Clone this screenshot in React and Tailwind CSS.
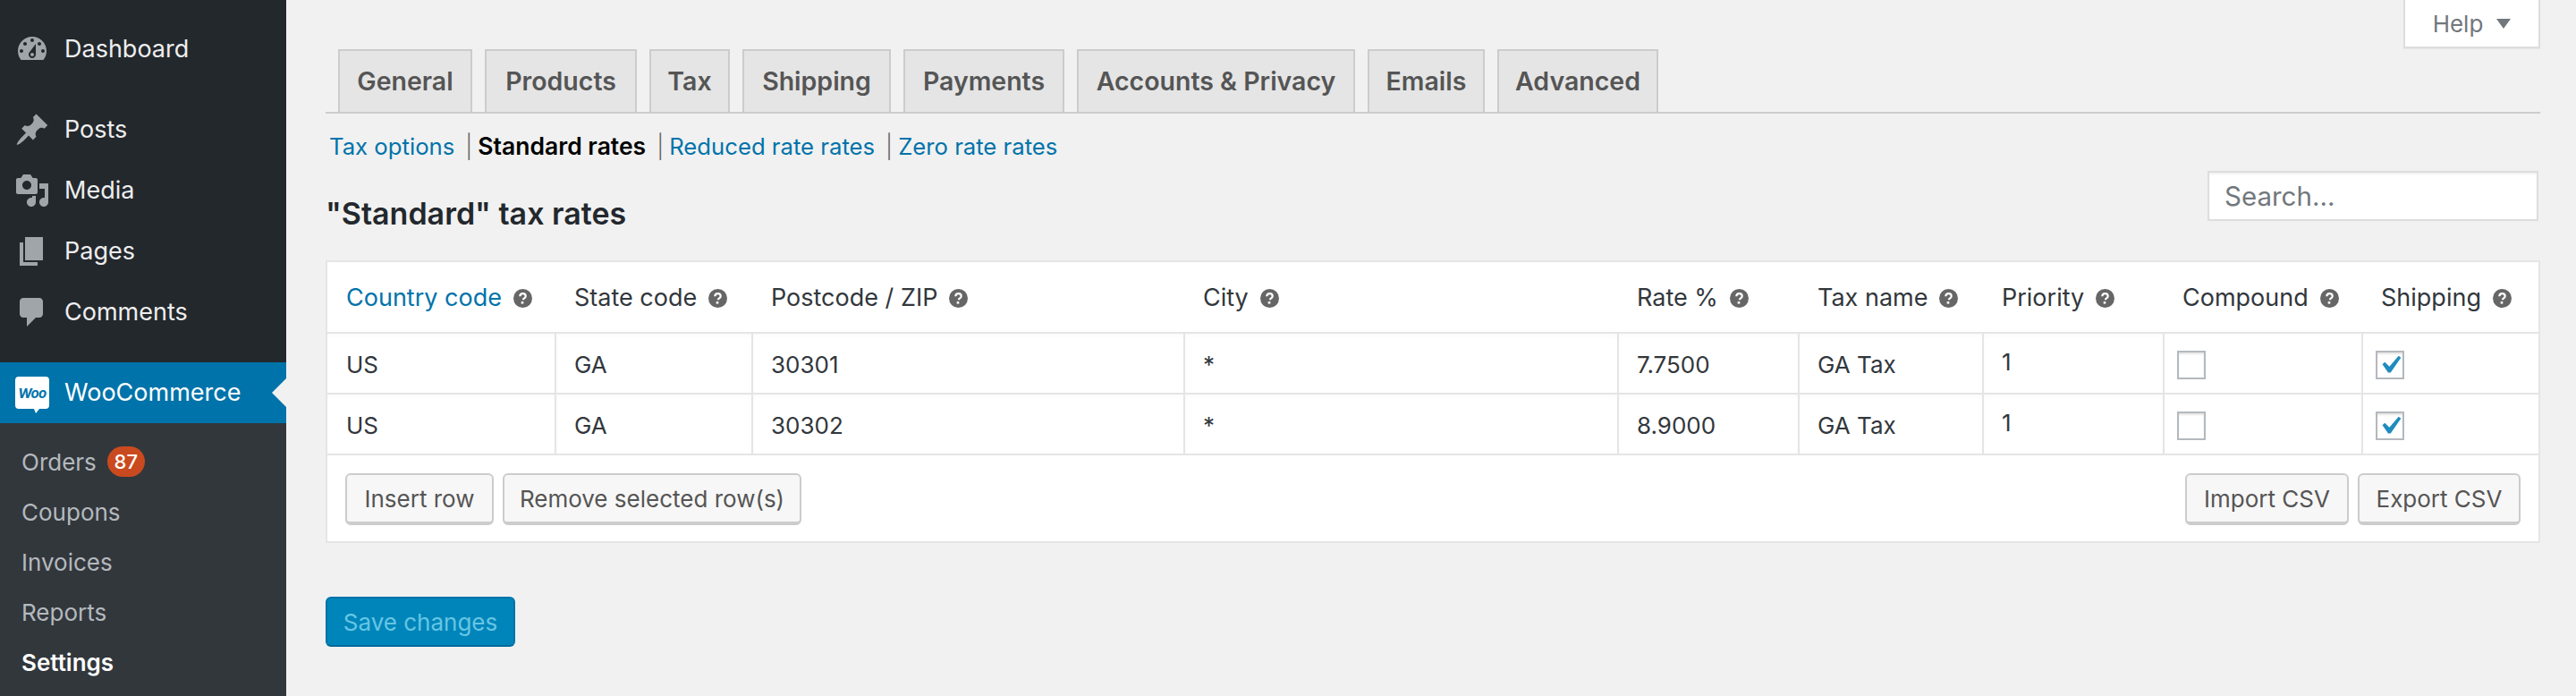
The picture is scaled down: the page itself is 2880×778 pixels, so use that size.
import React from 'react';

const menuItems = [
  { label: 'Posts', d: 'M10.44 3.02l1.82-1.82 6.36 6.35-1.83 1.82c-1.05-.68-2.48-.57-3.41.36l-.75.75c-.92.93-1.04 2.35-.35 3.41l-1.83 1.82-2.41-2.41-2.8 2.79c-.42.42-3.38 2.71-3.8 2.29s1.86-3.39 2.28-3.81l2.79-2.79L4.1 9.36l1.83-1.82c1.05.69 2.48.57 3.4-.36l.75-.75c.93-.92 1.05-2.35.36-3.41z' },
  { label: 'Media', d: 'M13 11V4c0-.55-.45-1-1-1h-1.67L9 1H5L3.67 3H2c-.55 0-1 .45-1 1v7c0 .55.45 1 1 1h10c.55 0 1-.45 1-1zM7 4.5c1.38 0 2.5 1.12 2.5 2.5S8.38 9.5 7 9.5 4.5 8.38 4.5 7 5.62 4.5 7 4.5zM14 6h5v10.5c0 1.38-1.12 2.5-2.5 2.5S14 17.88 14 16.5s1.12-2.5 2.5-2.5c.17 0 .34.02.5.05V9h-3V6zm-4 8.05V13h2v3.5c0 1.38-1.12 2.5-2.5 2.5S7 17.88 7 16.5 8.12 14 9.5 14c.17 0 .34.02.5.05z' },
  { label: 'Pages', d: 'M6 15V2h10v13H6zm-1 1h8v2H3V5h2v11z' },
  { label: 'Comments', d: 'M5 2h9c1.1 0 2 .9 2 2v7c0 1.1-.9 2-2 2h-2l-5 5v-5H5c-1.1 0-2-.9-2-2V4c0-1.1.9-2 2-2z' },
];

const dashboardPath = 'M3.76 16h12.48c1.1-1.37 1.76-3.11 1.76-5 0-4.42-3.58-8-8-8s-8 3.58-8 8c0 1.89.66 3.63 1.76 5zM10 4c.55 0 1 .45 1 1s-.45 1-1 1-1-.45-1-1 .45-1 1-1zM6 6c.55 0 1 .45 1 1s-.45 1-1 1-1-.45-1-1 .45-1 1-1zm8 0c.55 0 1 .45 1 1s-.45 1-1 1-1-.45-1-1 .45-1 1-1zm-5.37 5.55L12 7v6c0 1.1-.9 2-2 2s-2-.9-2-2c0-.57.24-1.08.63-1.45zM4 10c.55 0 1 .45 1 1s-.45 1-1 1-1-.45-1-1 .45-1 1-1zm12 0c.55 0 1 .45 1 1s-.45 1-1 1-1-.45-1-1 .45-1 1-1zm-5 3c0-.55-.45-1-1-1s-1 .45-1 1 .45 1 1 1 1-.45 1-1z';

const tabs = [
  { label: 'General', w: 'w-[150px]' },
  { label: 'Products', w: 'w-[170px]' },
  { label: 'Tax', w: 'w-[90px]' },
  { label: 'Shipping', w: 'w-[166px]' },
  { label: 'Payments', w: 'w-[180px]' },
  { label: 'Accounts & Privacy', w: 'w-[311px]' },
  { label: 'Emails', w: 'w-[131px]' },
  { label: 'Advanced', w: 'w-[180px]' },
];

const columns = [
  { label: 'Country code', w: 'w-[254px]', link: true },
  { label: 'State code', w: 'w-[220px]' },
  { label: 'Postcode / ZIP', w: 'w-[483px]' },
  { label: 'City', w: 'w-[485px]' },
  { label: 'Rate %', w: 'w-[202px]' },
  { label: 'Tax name', w: 'w-[206px]' },
  { label: 'Priority', w: 'w-[202px]' },
  { label: 'Compound', w: 'w-[222px]' },
  { label: 'Shipping', w: 'w-[198px]' },
];

const rows = [
  ['US', 'GA', '30301', '*', '7.7500', 'GA Tax', '1'],
  ['US', 'GA', '30302', '*', '8.9000', 'GA Tax', '1'],
];

const subItems = ['Coupons', 'Invoices', 'Reports'];

const MenuIcon = ({ d }) => (
  <svg viewBox="0 0 20 20" className="w-[40px] h-[40px] shrink-0 fill-[#a0a5aa]">
    <path d={d} />
  </svg>
);

const MenuItem = ({ label, d }) => (
  <div className="flex items-center h-[68px] pl-[16px] gap-[16px] text-[27px] text-[#eeeeee]">
    <MenuIcon d={d} />
    <span>{label}</span>
  </div>
);

const HelpTip = () => (
  <svg viewBox="0 0 21 21" className="w-[21px] h-[21px] shrink-0">
    <circle cx="10.5" cy="10.5" r="10.5" fill="#666666" />
    <path d="M7.3 8.2c.1-1.9 1.4-3 3.3-3 1.8 0 3.1 1 3.1 2.7 0 1.2-.6 1.9-1.6 2.5-.9.6-1.2 1-1.2 1.9" fill="none" stroke="#ffffff" strokeWidth="2.2" />
    <rect x="8.7" y="14" width="2.6" height="2.6" fill="#ffffff" />
  </svg>
);

const Checkbox = ({ checked }) => (
  <div className="w-[32px] h-[32px] border-2 border-[#b4b9be] bg-white shadow-[inset_0_2px_2px_rgba(0,0,0,0.1)]">
    {checked && (
      <svg viewBox="0 0 20 20" className="w-[40px] h-[40px] -ml-[6px] -mt-[6px] fill-[#1e8cbe] max-w-none">
        <path d="M14.83 4.89l1.34.94-5.81 8.38H9.02L5.78 9.67l1.34-1.25 2.57 2.4z" />
      </svg>
    )}
  </div>
);

const Button = ({ children, w }) => (
  <button type="button" className={`${w} h-[58px] rounded-[6px] border-2 border-b-4 border-[#cccccc] bg-[#f7f7f7] text-[26px] text-[#555555]`}>
    {children}
  </button>
);

const Separator = () => (
  <span className="ml-[12px] mr-[6px] text-[#666666] font-light">|</span>
);

const Sidebar = () => (
  <aside className="w-[320px] shrink-0 flex flex-col bg-[#23282d] pt-[21px]">
    <MenuItem label="Dashboard" d={dashboardPath} />
    <div className="flex flex-col mt-[22px] mb-[22px]">
      {menuItems.map((item) => (
        <MenuItem key={item.label} label={item.label} d={item.d} />
      ))}
    </div>
    <div className="relative flex items-center h-[68px] pl-[17px] gap-[17px] bg-[#0073aa] text-[27px] text-white">
      <svg viewBox="0 0 38 42" className="w-[38px] h-[42px] shrink-0 mt-[6px]">
        <path d="M4 0h30a4 4 0 0 1 4 4v28a4 4 0 0 1-4 4H27l-4 5-2-5H4a4 4 0 0 1-4-4V4a4 4 0 0 1 4-4z" fill="#ffffff" />
        <text x="19" y="24" textAnchor="middle" fontSize="15" fontWeight="700" fontStyle="italic" fill="#0073aa" fontFamily="Inter, sans-serif" letterSpacing="-0.6">Woo</text>
      </svg>
      <span>WooCommerce</span>
      <div className="absolute right-0 top-[18px] w-0 h-0 border-y-[16px] border-y-transparent border-r-[16px] border-r-[#f1f1f1]" />
    </div>
    <div className="flex-1 flex flex-col bg-[#32373c] pt-[15px] pl-[24px] text-[26px] text-[#b4b9be]">
      <div className="flex items-center h-[56px] gap-[12px]">
        <span>Orders</span>
        <span className="flex items-center justify-center w-[42px] h-[34px] rounded-full bg-[#ca4a1f] text-[22px] font-medium text-white">87</span>
      </div>
      {subItems.map((item) => (
        <div key={item} className="flex items-center h-[56px]">{item}</div>
      ))}
      <div className="flex items-center h-[56px] font-semibold text-white">Settings</div>
    </div>
  </aside>
);

const TaxTable = () => (
  <div className="w-[2476px] border-2 border-[#e5e5e5] bg-white">
    <table className="w-[2472px] table-fixed border-separate border-spacing-0 text-[26px] text-[#32373c]">
      <thead>
        <tr>
          {columns.map((col, i) => (
            <th key={col.label} className={`${col.w} ${i === 0 ? 'pl-[21px]' : 'pl-[22px]'} pt-[2px] h-[80px] border-b-2 border-[#e5e5e5] text-left font-normal text-[27px]`}>
              <div className="flex items-center gap-[13px]">
                <span className={col.link ? 'text-[#0073aa]' : ''}>{col.label}</span>
                <HelpTip />
              </div>
            </th>
          ))}
        </tr>
      </thead>
      <tbody>
        {rows.map((row) => (
          <tr key={row[2]}>
            {row.map((val, i) => (
              <td key={i} className={`h-[68px] pt-[2px] border-b-2 border-[#e5e5e5] shadow-[inset_0_3px_4px_rgba(0,0,0,0.02)] ${i === 0 ? 'pl-[21px]' : 'pl-[20px] border-l-2'} ${i === 6 ? 'pb-[6px]' : ''}`}>
                {val}
              </td>
            ))}
            <td className="h-[68px] border-b-2 border-l-2 border-[#e5e5e5] pl-[14px] pt-[4px]"><Checkbox /></td>
            <td className="h-[68px] border-b-2 border-l-2 border-[#e5e5e5] pl-[14px] pt-[4px]"><Checkbox checked /></td>
          </tr>
        ))}
      </tbody>
      <tfoot>
        <tr>
          <td colSpan={9} className="h-[96px] px-[20px] pt-[20px] align-top">
            <div className="flex justify-between">
              <div className="flex gap-[10px]">
                <Button w="w-[166px]">Insert row</Button>
                <Button w="w-[334px]">Remove selected row(s)</Button>
              </div>
              <div className="flex gap-[10px]">
                <Button w="w-[183px]">Import CSV</Button>
                <Button w="w-[182px]">Export CSV</Button>
              </div>
            </div>
          </td>
        </tr>
      </tfoot>
    </table>
  </div>
);

const App = () => (
  <div className="flex w-[2880px] h-[778px] overflow-hidden bg-[#f1f1f1] font-['Inter',sans-serif]">
    <Sidebar />
    <main className="flex-1 flex flex-col pl-[44px] pr-[40px]">
      <div className="flex justify-end h-[55px]">
        <div className="flex items-center justify-center gap-[15px] w-[153px] h-[54px] bg-white border-2 border-t-0 border-[#dddddd] shadow-[0_1px_1px_rgba(0,0,0,0.04)] text-[26px] text-[#72777c]">
          <span>Help</span>
          <div className="w-0 h-0 border-x-[8px] border-x-transparent border-t-[11px] border-t-[#72777c]" />
        </div>
      </div>
      <nav className="flex gap-[14px] pl-[14px] border-b-2 border-[#cccccc]">
        {tabs.map((tab) => (
          <div key={tab.label} className={`${tab.w} flex items-center justify-center h-[70px] bg-[#e5e5e5] border-2 border-b-0 border-[#cccccc] text-[28.5px] font-semibold text-[#555555]`}>
            {tab.label}
          </div>
        ))}
      </nav>
      <div className="flex items-center h-[34px] mt-[20px] pl-[4px] text-[25.7px] text-[#0073aa]">
        <span>Tax options</span>
        <Separator />
        <span className="font-semibold text-[26.5px] text-black">Standard rates</span>
        <Separator />
        <span>Reduced rate rates</span>
        <Separator />
        <span>Zero rate rates</span>
      </div>
      <div className="flex items-start justify-between h-[64px] mt-[10px]">
        <h2 className="mt-[28px] text-[34px] leading-[40px] font-semibold text-[#23282d]">"Standard" tax rates</h2>
        <input
          type="text"
          placeholder="Search..."
          className="w-[370px] h-[56px] mr-[2px] pl-[17px] bg-white border-2 border-[#dddddd] text-[29.5px] placeholder:text-[#72777c] outline-none shadow-[inset_0_2px_2px_rgba(0,0,0,0.05)]"
        />
      </div>
      <div className="mt-[36px]">
        <TaxTable />
      </div>
      <button type="button" className="self-start w-[212px] h-[56px] mt-[60px] rounded-[6px] bg-[#0085ba] border-2 border-[#0073aa] border-b-[#006799] text-[26px] text-[#66c6e4]">
        Save changes
      </button>
    </main>
  </div>
);

export default App;
